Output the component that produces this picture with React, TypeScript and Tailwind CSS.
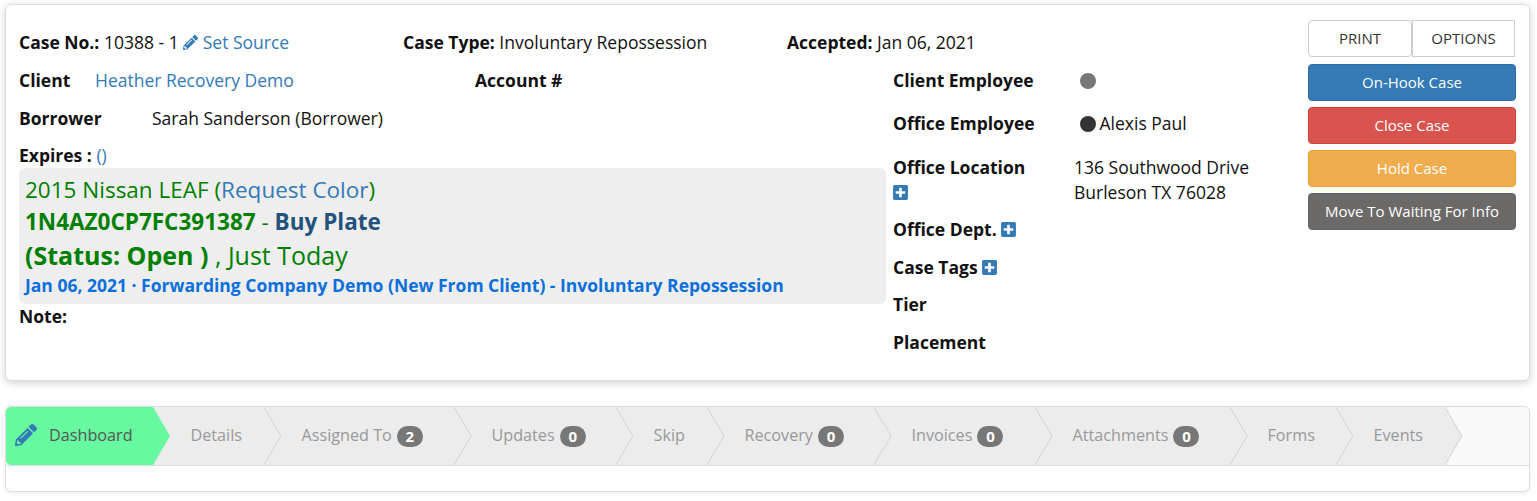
import React from "react";
import { FaPencilAlt, FaPlusSquare } from "react-icons/fa";

const tabs: { label: string; w: string; count?: number; active?: boolean }[] = [
  { label: "Dashboard", w: "w-[147px]", active: true },
  { label: "Details", w: "w-[111px]" },
  { label: "Assigned To", w: "w-[190px]", count: 2 },
  { label: "Updates", w: "w-[162px]", count: 0 },
  { label: "Skip", w: "w-[91px]" },
  { label: "Recovery", w: "w-[167px]", count: 0 },
  { label: "Invoices", w: "w-[161px]", count: 0 },
  { label: "Attachments", w: "w-[195px]", count: 0 },
  { label: "Forms", w: "w-[106px]" },
  { label: "Events", w: "w-[109px]" },
];

function Plus() {
  return <FaPlusSquare className="inline-block -ml-[1px] text-[#337ab7] text-[17px] align-[-2px]" />;
}

function InfoRow({ label, children, h }: { label: React.ReactNode; children?: React.ReactNode; h: string }) {
  return (
    <div className={`flex font-normal ${h}`}>
      <div className="w-[181px] shrink-0 font-bold leading-[25px]">{label}</div>
      <div className="leading-[25px]">{children}</div>
    </div>
  );
}

function Dot({ color }: { color: string }) {
  return <span className={`inline-block w-[16px] h-[16px] rounded-full align-[-2px] ml-[6px] ${color}`} />;
}

export default function App() {
  return (
    <div className="bg-white h-[501px] overflow-hidden pt-[4px] font-['Open_Sans',sans-serif] text-[17.5px] text-[#111]">
      <div className="ml-[5px] mr-[7px] h-[377px] bg-white border border-[#ddd] rounded-[6px] shadow-[0_2px_8px_rgba(0,0,0,0.18)] pl-[13px] pr-[13px] pt-[15px] flex">
        <div className="w-[1289px] shrink-0">
          <div className="flex h-[45px] items-center">
            <div className="w-[384px]">
              <b>Case No.:</b> 10388 - 1{" "}
              <FaPencilAlt className="inline-block text-[#337ab7] text-[15px] align-[-1px]" />{" "}
              <span className="text-[#337ab7]">Set Source</span>
            </div>
            <div className="w-[384px]">
              <b>Case Type:</b> Involuntary Repossession
            </div>
            <div>
              <b>Accepted:</b> Jan 06, 2021
            </div>
          </div>
          <div className="flex">
            <div className="w-[867px] shrink-0">
              <div className="flex h-[38px] items-start leading-[25px] pt-[3px]">
                <b className="w-[76px]">Client</b>
                <span className="w-[380px] text-[#337ab7]">Heather Recovery Demo</span>
                <b>Account #</b>
              </div>
              <div className="flex h-[32px] leading-[25px] pt-[3px]">
                <b className="w-[133px]">Borrower</b>
                <span>Sarah Sanderson (Borrower)</span>
              </div>
              <div className="h-[30px] leading-[25px] pt-[8px]">
                <b>Expires :</b> <span className="text-[#337ab7]">()</span>
              </div>
              <div className="mt-[3px] h-[136px] bg-[#eee] rounded-[6px] pl-[6px] pt-[6px]">
                <div className="text-[22.5px] leading-[32px] text-[#008000]">
                  2015 Nissan LEAF (<span className="text-[#337ab7]">Request Color</span>)
                </div>
                <div className="text-[22.5px] leading-[32px] text-[#008000]">
                  <b>1N4AZ0CP7FC391387</b> - <b className="text-[#23527c]">Buy Plate</b>
                </div>
                <div className="text-[25px] leading-[36px] -mt-[1px] text-[#008000]">
                  <b>(Status: Open )</b> , Just Today
                </div>
                <div className="text-[17.5px] leading-[24px] font-bold text-[#0b6fdc]">
                  Jan 06, 2021 · Forwarding Company Demo (New From Client) - Involuntary Repossession
                </div>
              </div>
              <div className="leading-[25px]">
                <b>Note:</b>
              </div>
            </div>
            <div className="ml-[7px] grow pt-[3px]">
              <InfoRow label="Client Employee" h="h-[43px]">
                <Dot color="bg-[#777]" />
              </InfoRow>
              <InfoRow label="Office Employee" h="h-[44px]">
                <Dot color="bg-[#333]" />
                <span className="ml-[3.5px]">Alexis Paul</span>
              </InfoRow>
              <InfoRow
                label={
                  <>
                    Office Location
                    <br />
                    <Plus />
                  </>
                }
                h="h-[62px]"
              >
                136 Southwood Drive
                <br />
                Burleson TX 76028
              </InfoRow>
              <InfoRow
                label={
                  <>
                    Office Dept. <Plus />
                  </>
                }
                h="h-[38px]"
              />
              <InfoRow
                label={
                  <>
                    Case Tags <Plus />
                  </>
                }
                h="h-[37px]"
              />
              <InfoRow label="Tier" h="h-[38px]" />
              <InfoRow label="Placement" h="h-[38px]" />
            </div>
          </div>
        </div>
        <div className="w-[208px] shrink-0 text-[15px]">
          <div className="flex h-[37px]">
            <div className="w-[104px] h-full flex items-center justify-center border border-[#ccc] rounded-[4px] text-[#333] bg-white">
              PRINT
            </div>
            <div className="w-[103px] h-full flex items-center justify-center border border-[#ccc] text-[#333] bg-white">
              OPTIONS
            </div>
          </div>
          <div className="mt-[7px] flex flex-col gap-[6px] text-white">
            <div className="h-[37px] flex items-center justify-center rounded-[4px] bg-[#337ab7] border border-[#2e6da4]">On-Hook Case</div>
            <div className="h-[37px] flex items-center justify-center rounded-[4px] bg-[#d9534f] border border-[#d43f3a]">Close Case</div>
            <div className="h-[37px] flex items-center justify-center rounded-[4px] bg-[#f0ad4e] border border-[#eea236]">Hold Case</div>
            <div className="h-[37px] flex items-center justify-center rounded-[4px] bg-[#6c6a68] border border-[#666]">Move To Waiting For Info</div>
          </div>
        </div>
      </div>

      <div className="mt-[25px] ml-[5px] mr-[7px] h-[86px] bg-white border border-[#ddd] rounded-[6px] shadow-[0_1px_4px_rgba(0,0,0,0.08)]">
        <div className="flex h-[59px] bg-[#f9f9f9] border-b border-[#ddd] rounded-t-[6px] text-[16.2px]">
          {tabs.map((t, i) => (
            <div
              key={t.label}
              style={{ zIndex: tabs.length - i }}
              className={`relative h-[58px] flex items-center pb-[2px] leading-none whitespace-nowrap ${t.w} ${
                t.active
                  ? "bg-[#67f9a0] text-[#555] pl-[9px] rounded-l-[5px]"
                  : "bg-[#ececec] text-[#999] pl-[37.5px]"
              }`}
            >
              {t.active && <FaPencilAlt className="text-[#337ab7] text-[22px] mr-[12px]" />}
              {t.label}
              {t.count !== undefined && (
                <span className="ml-[5px] inline-flex items-center justify-center h-[21px] w-[26px] rounded-full bg-[#777] text-white text-[15px] font-bold mt-[2px]">
                  {t.count}
                </span>
              )}
              <svg className="absolute left-full top-0" width="18" height="58" viewBox="0 0 18 58">
                <polygon points="0,0 17,29 0,58" fill={t.active ? "#67f9a0" : "#ececec"} />
                {!t.active && <polyline points="0,0 17,29 0,58" fill="none" stroke="#d2d2d2" strokeWidth="1" />}
              </svg>
            </div>
          ))}
        </div>
      </div>
    </div>
  );
}
